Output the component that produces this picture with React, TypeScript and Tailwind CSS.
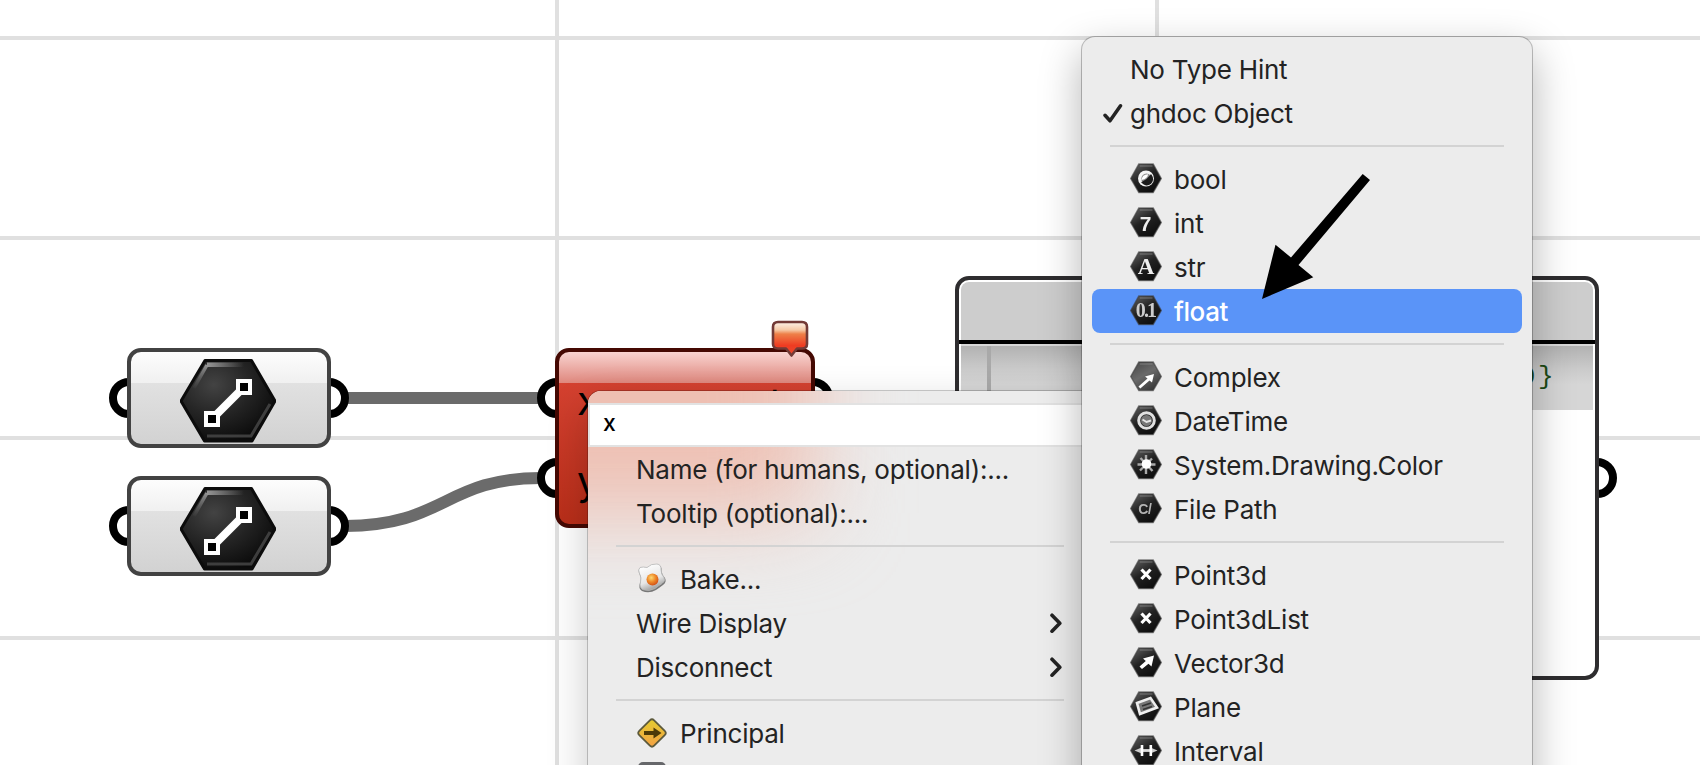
import type { ReactNode } from 'react';

type Glyph =
  | 'bool' | 'int' | 'str' | 'float' | 'complex' | 'date' | 'color' | 'path'
  | 'point' | 'vector' | 'plane' | 'interval';

const glyphs: Record<Glyph, ReactNode> = {
  bool: (
    <>
      <circle cx="16" cy="15.5" r="8" fill="#f4f4f4" />
      <circle cx="16.500" cy="15.800" r="5.200" fill="#8a8a8a" />
      <path d="M21 12.500A5.400 5.400 0 0 1 12.500 19.500Q17.500 17.500 21 12.500Z" fill="#1c1c1c" stroke="#1c1c1c" strokeWidth="1.800" />
      <path d="M11.500 17Q12 11.500 18 11.200Q18 15.500 11.500 17Z" fill="#fff" />
    </>
  ),
  int: <text x="15.5" y="23.5" textAnchor="middle" fontSize="21" fontWeight="700" fill="#eee" className="font-['Liberation_Sans',sans-serif]">7</text>,
  str: <text x="16" y="22.5" textAnchor="middle" fontSize="23" fontWeight="700" fill="#eee" className="font-['Liberation_Serif',serif]">A</text>,
  float: <text x="15.5" y="22" textAnchor="middle" fontSize="20" fontWeight="700" fill="#ccc" letterSpacing="-1.8" className="font-['Liberation_Serif',serif]">0.1</text>,
  complex: <path d="M8.500 25.500L10.300 27.500L19.500 19.500L22 21.500L24 13L15 15.500L17.500 17.500Z" fill="#fff" />,
  date: (
    <>
      <circle cx="16.500" cy="15.500" r="7.800" fill="none" stroke="#e0e0e0" strokeWidth="3" />
      <circle cx="16.500" cy="15.500" r="5.500" fill="#777" />
      <path d="M12.500 14.500l4 2.500 4.500-1.500" fill="none" stroke="#e4e4e4" strokeWidth="2" />
    </>
  ),
  color: (
    <>
      <path d="M16 6v19M7.500 15.500h18M10.500 9l12 13M22 9.500L10 21.500" stroke="#aaa" strokeWidth="2.400" />
      <circle cx="16.500" cy="15" r="4.800" fill="#fff" />
    </>
  ),
  path: <text x="15" y="20.5" textAnchor="middle" fontSize="14" fontWeight="700" fill="#b4b4b4" className="font-['Liberation_Sans',sans-serif]">C/</text>,
  point: <path d="M11.500 10.500l9 9.500M20.500 10.500l-9 9.500" stroke="#fff" strokeWidth="3.200" />,
  vector: <path d="M9.500 19.500L12 22L18.500 16.800L21.500 19.500L24 8.500L13 11.500L15.800 14Z" fill="#fff" />,
  plane: (
    <>
      <path d="M7 12L20.500 7L27 16.500L10 23Z" fill="#777" stroke="#eee" strokeWidth="2.600" />
      <path d="M12 15l9-3M13 18.500l9-3" stroke="#333" strokeWidth="1.500" />
    </>
  ),
  interval: (
    <>
      <path d="M4.500 15.500L11 12.800V18.200ZM27.500 15.500L21 12.800V18.200Z" fill="#ccc" />
      <path d="M11 15.500h10" stroke="#ddd" strokeWidth="2.800" />
      <path d="M12 10v11M20.800 10v11" stroke="#fff" strokeWidth="2.600" />
    </>
  ),
};

function HexIcon({ glyph }: { glyph: Glyph }) {
  const light = glyph === 'complex';
  return (
    <svg width="32" height="32" viewBox="0 0 32 32" className="shrink-0">
      <defs>
        <linearGradient id={`hex-${glyph}`} x1="0.15" y1="0" x2="0.8" y2="1">
          <stop offset="0" stopColor={light ? '#4a4a4a' : '#5c5c5c'} />
          <stop offset="0.45" stopColor={light ? '#6a6a6a' : '#222'} />
          <stop offset="1" stopColor={light ? '#333' : '#0c0c0c'} />
        </linearGradient>
      </defs>
      <g className="blur-[0.4px]">
        <path d="M8.800 1H23.200L31.300 15.500L23.200 29.600H8.800L0.700 15.500Z" fill={`url(#hex-${glyph})`} stroke="#3c3c3c" strokeWidth="1.400" strokeOpacity="0.6" />
        <path d="M9.800 3H22.500" stroke="#999" strokeOpacity="0.5" strokeWidth="1.200" />
        {glyphs[glyph]}
      </g>
    </svg>
  );
}

function Separator() {
  return (
    <div className="flex h-[22px] items-center pr-[28px] pl-[28px]">
      <div className="h-[2px] flex-1 bg-[#d3d3d3]" />
    </div>
  );
}

function CheckMark() {
  return (
    <svg width="22" height="20" viewBox="0 0 22 20">
      <path d="M3 12.300L8 17.800L18.500 2.800" fill="none" stroke="#232323" strokeWidth="3.500" strokeLinecap="round" strokeLinejoin="round" />
    </svg>
  );
}

interface HintRow {
  label: string;
  glyph?: Glyph;
  checked?: boolean;
  active?: boolean;
}

const hintGroups: HintRow[][] = [
  [{ label: 'No Type Hint' }, { label: 'ghdoc Object', checked: true }],
  [
    { label: 'bool', glyph: 'bool' },
    { label: 'int', glyph: 'int' },
    { label: 'str', glyph: 'str' },
    { label: 'float', glyph: 'float', active: true },
  ],
  [
    { label: 'Complex', glyph: 'complex' },
    { label: 'DateTime', glyph: 'date' },
    { label: 'System.Drawing.Color', glyph: 'color' },
    { label: 'File Path', glyph: 'path' },
  ],
  [
    { label: 'Point3d', glyph: 'point' },
    { label: 'Point3dList', glyph: 'point' },
    { label: 'Vector3d', glyph: 'vector' },
    { label: 'Plane', glyph: 'plane' },
    { label: 'Interval', glyph: 'interval' },
  ],
];

function HintMenu() {
  return (
    <div className="absolute top-[37px] left-[1082px] h-[800px] w-[450px] rounded-[13px] bg-[#ececec] pt-[10px] shadow-[0_0_0_1px_rgba(0,0,0,0.24),0_16px_40px_2px_rgba(0,0,0,0.28)]">
      {hintGroups.map((group, i) => (
        <div key={i}>
          {i > 0 && <Separator />}
          {group.map((row) => (
            <div
              key={row.label}
              className={`mx-[10px] flex h-[44px] items-center rounded-[8px] ${row.active ? 'bg-[#5a94f8] font-medium tracking-[-0.4px] text-white' : ''}`}
            >
              <div className="flex w-[38px] items-center pl-[10px]">{row.checked && <CheckMark />}</div>
              {row.glyph && (
                <div className="mr-[12px]">
                  <HexIcon glyph={row.glyph} />
                </div>
              )}
              <span className="pt-[2px] whitespace-pre">{row.label}</span>
            </div>
          ))}
        </div>
      ))}
    </div>
  );
}

function Chevron() {
  return (
    <svg width="14" height="20" viewBox="0 0 14 20">
      <path d="M2 2.200L9.800 10.200L2 18.200" fill="none" stroke="#232323" strokeWidth="3.600" strokeLinecap="round" strokeLinejoin="round" />
    </svg>
  );
}

function EggIcon() {
  return (
    <svg width="32" height="32" viewBox="0 0 32 32">
      <defs>
        <linearGradient id="egg" x1="0.3" y1="0" x2="0.7" y2="1">
          <stop offset="0" stopColor="#fff" />
          <stop offset="0.6" stopColor="#e6e6e6" />
          <stop offset="1" stopColor="#8c8c8c" />
        </linearGradient>
        <radialGradient id="yolk" cx="0.4" cy="0.35" r="0.7">
          <stop offset="0" stopColor="#fbd873" />
          <stop offset="0.5" stopColor="#ef8a2a" />
          <stop offset="1" stopColor="#cf4a14" />
        </radialGradient>
      </defs>
      <path d="M4 5Q7 4 11 5Q15 1 21 1.500Q26 2 25.500 8Q26 12 29 15Q31 19 27 22Q23 25 20 27Q13 31 6 28Q2 25 4 20Q6 15 3.500 11Q1.500 7 4 5Z" fill="#777" />
      <path d="M4 4.500Q7 3.500 11 4.500Q15 0.500 21 1Q25.500 1.500 25 7Q25 11 28 14.500Q30 18 26 20.500Q22 23 19 25.500Q13 29 6.500 26.500Q3 24 4.500 19Q6 15 3.500 10.500Q1.500 6.500 4 4.500Z" fill="url(#egg)" stroke="#b8b8b8" strokeWidth="0.800" />
      <circle cx="16.500" cy="16.500" r="6" fill="url(#yolk)" />
    </svg>
  );
}

function SignIcon() {
  return (
    <svg width="32" height="32" viewBox="0 0 32 32">
      <defs>
        <linearGradient id="sign" x1="0" y1="0" x2="1" y2="1">
          <stop offset="0" stopColor="#e3cd2f" />
          <stop offset="1" stopColor="#f5a044" />
        </linearGradient>
      </defs>
      <rect x="5.500" y="5.500" width="21" height="21" rx="3" transform="rotate(45 16 16)" fill="url(#sign)" stroke="#5d5a3c" strokeWidth="1.800" />
      <path d="M8 14H17.500V10.500L25.500 16L17.500 21.500V18H8Z" fill="#4d3a08" />
    </svg>
  );
}

function ActionRow({ label, icon, submenu }: { label: string; icon?: ReactNode; submenu?: boolean }) {
  return (
    <div className="flex h-[44px] items-center pr-[12px] pl-[48px]">
      {icon && <div className="mr-[12px]">{icon}</div>}
      <span className="flex-1 pt-[2px] whitespace-pre">{label}</span>
      {submenu && <Chevron />}
    </div>
  );
}

function ParamMenu() {
  return (
    <div className="absolute top-[391px] left-[588px] flex h-[420px] w-[494px] flex-col overflow-hidden rounded-tl-[13px] bg-[#ececec]">
      <div className="pointer-events-none absolute top-[-110px] left-[-110px] h-[232px] w-[335px] bg-[#eebfb2] blur-[44px]" />
      <div className="relative mt-[12px] flex h-[44px] items-center border-y-2 border-l-2 border-[#e2e2e2] bg-white pb-[3px] pl-[13px] text-[23px] font-medium text-black">
        <span className="leading-none">x</span>
      </div>
      <div className="relative w-[488px]">
        <ActionRow label="Name (for humans, optional):..." />
        <ActionRow label="Tooltip (optional):..." />
        <div className="mr-[-16px]"><Separator /></div>
        <ActionRow label="Bake..." icon={<EggIcon />} />
        <ActionRow label="Wire Display" submenu />
        <ActionRow label="Disconnect" submenu />
        <div className="mr-[-16px]"><Separator /></div>
        <ActionRow label="Principal" icon={<SignIcon />} />
        <div className="mt-[7px] ml-[50px] h-[28px] w-[28px] rounded-[5px] bg-[#66676a]" />
      </div>
    </div>
  );
}

function Port({ className }: { className: string }) {
  return <div className={`absolute h-[40px] w-[40px] rounded-full border-8 border-black bg-white ${className}`} />;
}

function LineParam({ className }: { className: string }) {
  return (
    <div className={`absolute left-[127px] flex h-[100px] w-[204px] justify-center overflow-hidden rounded-[14px] border-4 border-[#424242] bg-[linear-gradient(#fdfdfd_0px,#f0f0f0_31px,#e1e1e1_31px,#d2d2d2_92px)] ${className}`}>
      <svg width="96" height="92" viewBox="0 0 96 92" className="relative left-[-1px]">
        <defs>
          <radialGradient id="big-hex" cx="0.35" cy="0.3" r="0.75">
            <stop offset="0" stopColor="#434343" />
            <stop offset="0.5" stopColor="#252525" />
            <stop offset="1" stopColor="#0a0a0a" />
          </radialGradient>
          <linearGradient id="shine" gradientUnits="userSpaceOnUse" x1="26" y1="0" x2="64" y2="0">
            <stop offset="0" stopColor="#999" />
            <stop offset="1" stopColor="#999" stopOpacity="0" />
          </linearGradient>
          <linearGradient id="edge" gradientUnits="userSpaceOnUse" x1="0" y1="12" x2="0" y2="38">
            <stop offset="0" stopColor="#999" />
            <stop offset="1" stopColor="#777" stopOpacity="0" />
          </linearGradient>
        </defs>
        <g className="blur-[0.7px]">
          <path d="M25 8.500H71.500L95 49L72 89H24.500L1 49Z" fill="url(#big-hex)" stroke="#0c0c0c" strokeWidth="3" strokeLinejoin="round" />
          <rect x="27" y="10.500" width="37" height="4.500" fill="url(#shine)" />
          <path d="M27 13L14 36" stroke="url(#edge)" strokeWidth="3.500" />
          <path d="M90 52L71 84H27" fill="none" stroke="#4a4a4a" strokeWidth="3" strokeOpacity="0.8" />
          <path d="M34 65L62 37" stroke="#fff" strokeWidth="8" />
        </g>
        <g className="blur-[0.4px]">
          <rect x="26" y="61" width="12" height="12" fill="#000" stroke="#fff" strokeWidth="4" />
          <rect x="58" y="29" width="12" height="12" fill="#000" stroke="#fff" strokeWidth="4" />
        </g>
      </svg>
    </div>
  );
}

function ScriptNode() {
  return (
    <div className="absolute top-[348px] left-[555px] h-[180px] w-[260px] rounded-[14px] border-4 border-[#450903] bg-[linear-gradient(#f8d3d0_0px,#df877d_31px,#d44130_31px,#b92e19_172px)] pr-[20px] pl-[18px] text-[40px] text-black">
      <div className="flex h-[80px] items-center justify-between leading-none">
        <span className="pt-[18px]">x</span>
        <span className="pt-[22px] pr-[9px]">out</span>
      </div>
      <div className="flex h-[80px] items-center leading-none">
        <span className="pt-[18px]">y</span>
      </div>
    </div>
  );
}

function WarningBalloon() {
  return (
    <svg width="40" height="42" viewBox="0 0 40 42" className="absolute top-[319px] left-[770px]">
      <defs>
        <linearGradient id="balloon" x1="0" y1="0" x2="0" y2="1">
          <stop offset="0" stopColor="#fdf3ea" />
          <stop offset="0.24" stopColor="#f6c8a4" />
          <stop offset="0.36" stopColor="#ee8048" />
          <stop offset="0.7" stopColor="#ee3c22" />
          <stop offset="1" stopColor="#e8482e" />
        </linearGradient>
      </defs>
      <path d="M8 3H32Q37 3 37 8V25Q37 29.500 32 29.500H27L21.500 36.500L16 29.500H8Q3 29.500 3 25V8Q3 3 8 3Z" fill="url(#balloon)" stroke="#733a36" strokeWidth="2.600" strokeLinejoin="round" className="blur-[0.5px]" />
    </svg>
  );
}

function Panel() {
  return (
    <div className="absolute top-[276px] left-[955px] flex h-[404px] w-[644px] flex-col rounded-[14px] border-4 border-[#2e2d2f] bg-white">
      <div className="mx-[2px] mt-[2px] h-[58px] rounded-t-[8px] bg-[#cdcdcd]" />
      <div className="h-[4px] bg-black" />
      <div className="mx-[2px] h-[2px] bg-[#d8d8d8]" />
      <div className="mx-[2px] flex h-[64px] justify-between bg-[linear-gradient(#b2b2b2_0%,#cacaca_35%,#d6d6d6_60%,#d6d6d6_100%)]">
        <div className="ml-[26px] w-[4px] bg-[#a9a9a9]" />
        <div className="pt-[15px] pr-[37px] font-['Liberation_Mono',monospace] text-[26px] leading-[32px] tracking-[2.500px] text-[#1c4a14]">{'{0;0}'}</div>
      </div>
    </div>
  );
}

export default function App() {
  return (
    <main className="relative h-[765px] w-[1700px] overflow-hidden bg-white font-['Inter',sans-serif] text-[26px] leading-none tracking-[-0.23px] text-[#232323]">
      <svg width="1700" height="765" viewBox="0 0 1700 765" className="absolute inset-0">
        <g stroke="#e0e0e0" strokeWidth="4">
          <path d="M0 38H1700M0 238H1700M0 438H1700M0 638H1700M557 0V765M1157 0V765" />
        </g>
        <g fill="none" stroke="#6b6b6b" strokeWidth="12">
          <path d="M345 398H541" />
          <path d="M345 526C445 526 445 478 541 478" />
        </g>
      </svg>
      <Port className="top-[378px] left-[109px]" />
      <Port className="top-[378px] left-[309px]" />
      <Port className="top-[506px] left-[109px]" />
      <Port className="top-[506px] left-[309px]" />
      <LineParam className="top-[348px]" />
      <LineParam className="top-[476px]" />
      <Port className="top-[378px] left-[537px]" />
      <Port className="top-[458px] left-[537px]" />
      <Port className="top-[378px] left-[793px]" />
      <ScriptNode />
      <WarningBalloon />
      <Port className="top-[458px] left-[1577px]" />
      <Panel />
      <div className="absolute top-[391px] left-[588px] h-[420px] w-[900px] rounded-[13px] shadow-[0_0_0_1px_rgba(0,0,0,0.2),0_16px_40px_2px_rgba(0,0,0,0.2)] [clip-path:inset(-100px_406px_-100px_-100px)]" />
      <ParamMenu />
      <HintMenu />
      <svg width="110" height="128" viewBox="1261 173 110 128" className="absolute top-[173px] left-[1261px]">
        <path d="M1362.700 174L1370 180L1298.500 265L1313.300 277.200L1262 299L1275.500 244.700L1291 257.500Z" fill="#000" />
      </svg>
    </main>
  );
}
